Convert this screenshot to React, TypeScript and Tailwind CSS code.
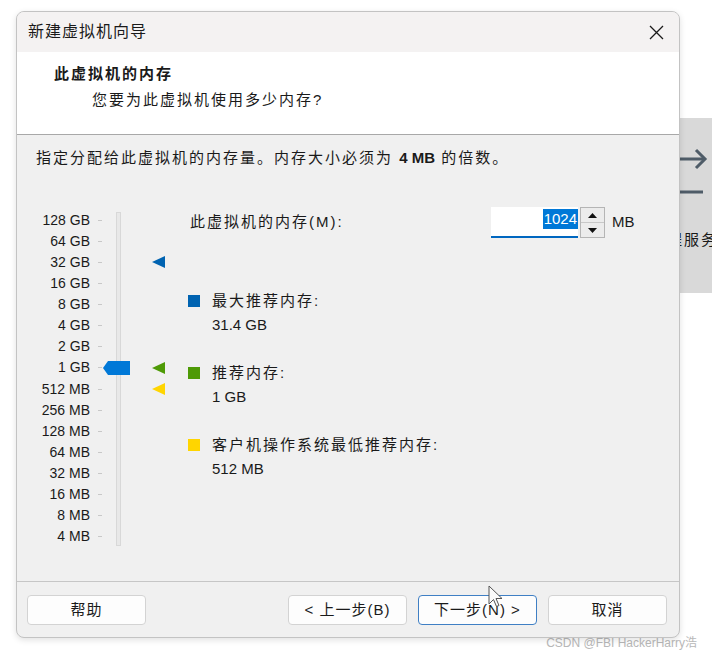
import React from 'react';

const FONT = { fontFamily: '"Liberation Sans", "Noto Sans CJK SC", sans-serif' };

const scale = [
  '128 GB', '64 GB', '32 GB', '16 GB', '8 GB', '4 GB', '2 GB', '1 GB',
  '512 MB', '256 MB', '128 MB', '64 MB', '32 MB', '16 MB', '8 MB', '4 MB',
];

// which row gets a marker triangle
const markers: Record<number, string> = {
  2: '#0063b1',
  7: '#4e9a06',
  8: '#ffd500',
};

const legend = [
  { color: 'bg-[#0063b1]', title: '最大推荐内存:', value: '31.4 GB' },
  { color: 'bg-[#4e9a06]', title: '推荐内存:', value: '1 GB' },
  { color: 'bg-[#ffd500]', title: '客户机操作系统最低推荐内存:', value: '512 MB' },
];

function Triangle({ color }: { color: string }) {
  return (
    <svg width="13" height="12" viewBox="0 0 13 12">
      <path d="M0 6 L13 0 L13 12 Z" fill={color} />
    </svg>
  );
}

function Slider() {
  return (
    <div className="relative flex pt-[2.5px]">
      {/* labels */}
      <div className="w-[53px] flex flex-col text-[14px] text-[#1a1a1a]">
        {scale.map(s => (
          <div key={s} className="h-[21.13px] leading-[21.13px] text-right whitespace-nowrap">{s}</div>
        ))}
      </div>
      {/* ticks */}
      <div className="ml-[8px] w-[4px] flex flex-col">
        {scale.map(s => (
          <div key={s} className="h-[21.13px] flex items-center">
            <div className="w-[4px] h-[1px] bg-[#c8c8c8]"></div>
          </div>
        ))}
      </div>
      {/* track */}
      <div className="ml-[14px] mt-[2.5px] w-[5px] h-[334px] bg-[#e8e8e8] border border-[#d8d8d8]"></div>
      {/* thumb */}
      <div className="absolute left-[66px] top-[154px]">
        <svg width="27" height="14" viewBox="0 0 27 14">
          <path d="M0 7 L5 0 H27 V14 H5 Z" fill="#0078d7" />
        </svg>
      </div>
      {/* markers */}
      <div className="ml-[31px] w-[13px] flex flex-col">
        {scale.map((s, i) => (
          <div key={s} className="h-[21.13px] flex items-center">
            {markers[i] && <Triangle color={markers[i]} />}
          </div>
        ))}
      </div>
    </div>
  );
}

function Spinner() {
  return (
    <div className="ml-[2px] w-[25px] h-[31px] flex flex-col border border-[#b5b5b5] bg-[#f4f4f4]">
      <div className="flex-1 flex items-center justify-center border-b border-[#c8c8c8] bg-[#ececec]">
        <svg width="9" height="5" viewBox="0 0 9 5"><path d="M0 5 L4.5 0 L9 5 Z" fill="#111" /></svg>
      </div>
      <div className="flex-1 flex items-center justify-center bg-[#ececec]">
        <svg width="9" height="5" viewBox="0 0 9 5"><path d="M0 0 L4.5 5 L9 0 Z" fill="#111" /></svg>
      </div>
    </div>
  );
}

function Button({ label, focused }: { label: string; focused?: boolean }) {
  return (
    <button
      className={`w-[119px] h-[30px] rounded-[4px] bg-[#fdfdfd] text-[15px] text-[#1a1a1a] tracking-[1px] border ${
        focused ? 'border-[#3f7fc4]' : 'border-[#d3d3d3]'
      }`}
    >
      {label}
    </button>
  );
}

export default function App() {
  return (
    <div className="relative w-[712px] h-[656px] overflow-hidden bg-white" style={FONT}>
      {/* window behind the dialog */}
      <div className="absolute left-[590px] top-[118px] w-[140px] h-[175px] bg-[#d9d9d9]">
        <svg className="absolute left-[80px] top-[27px]" width="40" height="52" viewBox="0 0 40 52">
          <path d="M0 14 H34" stroke="#4f5c68" strokeWidth="3" fill="none" />
          <path d="M26 5 L35 14 L26 23" stroke="#4f5c68" strokeWidth="3" fill="none" />
          <path d="M0 47 H33" stroke="#4f5c68" strokeWidth="3" fill="none" />
        </svg>
        <div className="absolute left-[60px] top-[111px] text-[15px] tracking-[2px] text-[#1a1a1a] whitespace-nowrap">远程服务器</div>
      </div>

      {/* dialog */}
      <div className="relative z-10 ml-[16px] mt-[11px] w-[664px] h-[627px] rounded-[8px] border border-[#c3c3c3] bg-[#f0f0f0] overflow-hidden shadow-[0_2px_6px_rgba(0,0,0,0.12)] text-[#1a1a1a]">
        {/* title bar */}
        <div className="h-[40px] flex items-center justify-between pl-[11px] pr-[15px] bg-[#f4f2f2]">
          <span className="text-[16px] tracking-[1px]">新建虚拟机向导</span>
          <svg width="15" height="15" viewBox="0 0 15 15">
            <path d="M1 1 L14 14 M14 1 L1 14" stroke="#1a1a1a" strokeWidth="1.3" />
          </svg>
        </div>

        {/* header */}
        <div className="h-[83px] bg-white border-b border-[#a8a8a8] pt-[11px]">
          <div className="pl-[37px] h-[22px] leading-[22px] text-[15px] font-bold tracking-[2px]">此虚拟机的内存</div>
          <div className="pl-[75px] mt-[5px] h-[20px] leading-[20px] text-[15px] tracking-[2px]">您要为此虚拟机使用多少内存?</div>
        </div>

        {/* body */}
        <div className="h-[447px] pt-[13px] border-b border-[#c6c6c6]">
          <div className="pl-[19px] h-[20px] leading-[20px] text-[15px] tracking-[2px]">
            指定分配给此虚拟机的内存量。内存大小必须为 <span className="font-bold tracking-normal">4 MB</span> 的倍数。
          </div>

          <div className="mt-[39px] pl-[20px] flex">
            <Slider />

            <div className="ml-[25px] flex flex-col">
              <div className="h-[31px] flex items-center">
                <span className="w-[301px] text-[15px] tracking-[2px]">此虚拟机的内存(M):</span>
                <div className="w-[87px] h-[31px] bg-white border-b-2 border-[#0067c0] flex items-start justify-end pt-[2px]">
                  <span className="bg-[#0078d7] text-white text-[15px] leading-[20px] px-[1px]">1024</span>
                </div>
                <Spinner />
                <span className="ml-[7px] text-[15px]">MB</span>
              </div>

              <div className="mt-[51px] -ml-[2px] flex flex-col gap-[24px]">
                {legend.map(l => (
                  <div key={l.title} className="flex">
                    <div className="w-[24px] h-[24px] flex items-center">
                      <div className={`w-[12px] h-[12px] ${l.color}`}></div>
                    </div>
                    <div className="flex flex-col text-[15px]">
                      <span className="h-[24px] leading-[24px] tracking-[2px]">{l.title}</span>
                      <span className="h-[24px] leading-[24px]">{l.value}</span>
                    </div>
                  </div>
                ))}
              </div>
            </div>
          </div>
        </div>

        {/* footer */}
        <div className="flex items-start pt-[13px] pl-[10px] pr-[12px]">
          <Button label="帮助" />
          <div className="flex-1"></div>
          <div className="flex gap-[11px]">
            <Button label="< 上一步(B)" />
            <Button label="下一步(N) >" focused />
            <Button label="取消" />
          </div>
        </div>
      </div>

      {/* mouse pointer */}
      <svg className="absolute left-[488px] top-[585px] z-20" width="16" height="24" viewBox="0 0 16 24">
        <path d="M1 1 L1 19 L5.5 14.5 L8.5 21.5 L11 20.5 L8 13.5 L14 13.5 Z" fill="#fafafa" stroke="#555" strokeWidth="1" />
      </svg>

      {/* watermark */}
      <div className="absolute right-[15px] top-[634px] text-[12px] text-[#b8b8b8] whitespace-nowrap">CSDN @FBI HackerHarry浩</div>
    </div>
  );
}
